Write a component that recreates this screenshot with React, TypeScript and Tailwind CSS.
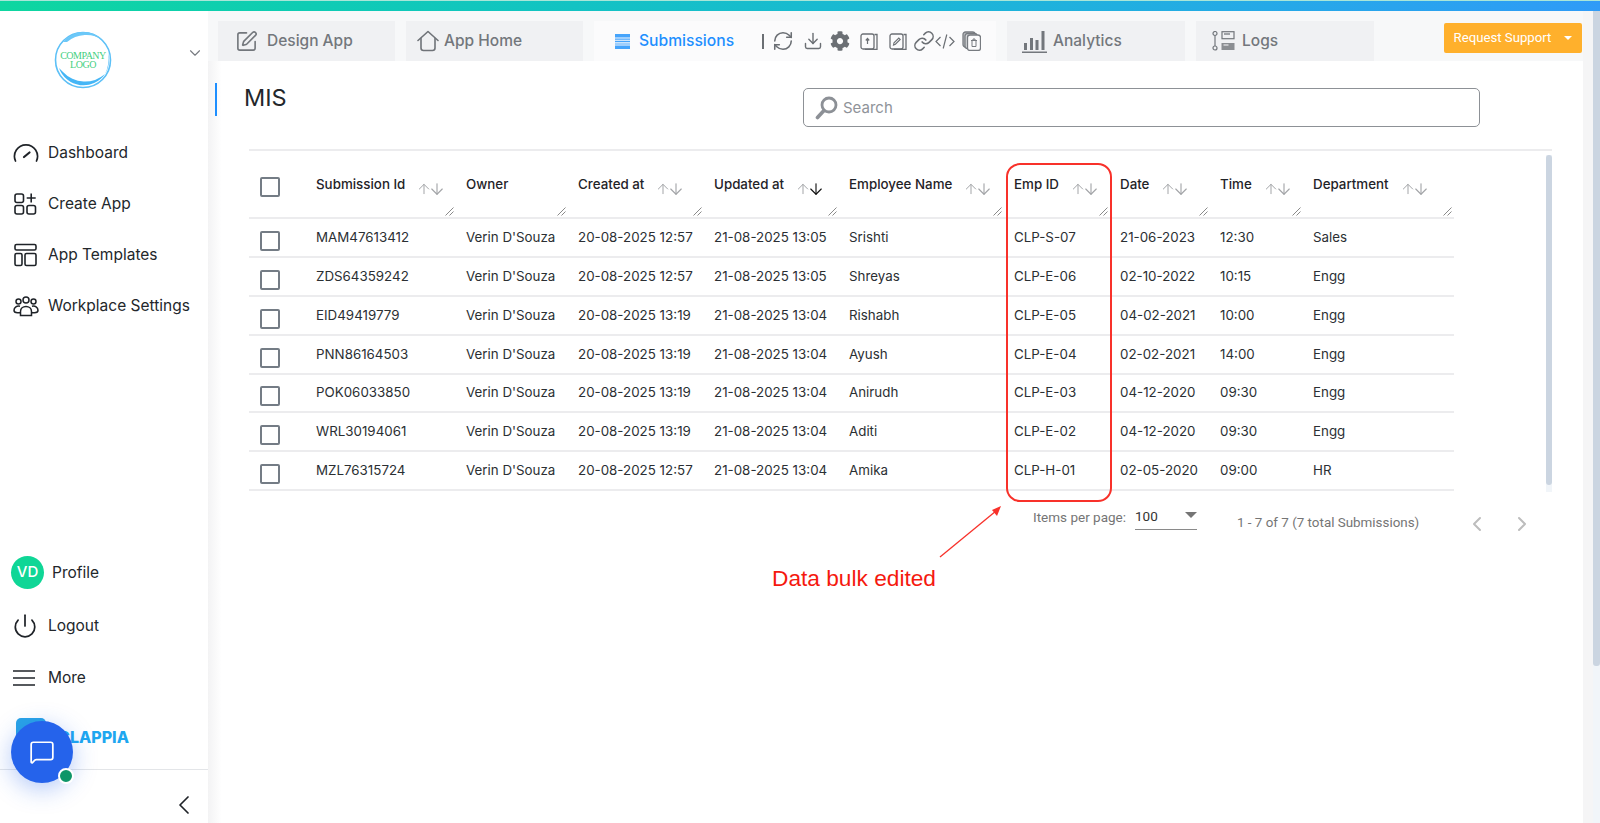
import { ArrowDown, ArrowUp, ChevronDown, ChevronLeft, ChevronRight, Download, Link, MessageSquare, Power, RefreshCw, SquarePen } from "lucide-react"
import { FaCog } from "react-icons/fa"

const gridCols = "grid grid-cols-[57px_150px_112px_136px_135px_165px_106px_100px_93px_151px]"

const columns = [
  { label: "Submission Id", sort: true },
  { label: "Owner", sort: false },
  { label: "Created at", sort: true },
  { label: "Updated at", sort: true, active: true },
  { label: "Employee Name", sort: true },
  { label: "Emp ID", sort: true },
  { label: "Date", sort: true },
  { label: "Time", sort: true },
  { label: "Department", sort: true },
]

const rows = [
  ["MAM47613412", "Verin D'Souza", "20-08-2025 12:57", "21-08-2025 13:05", "Srishti", "CLP-S-07", "21-06-2023", "12:30", "Sales"],
  ["ZDS64359242", "Verin D'Souza", "20-08-2025 12:57", "21-08-2025 13:05", "Shreyas", "CLP-E-06", "02-10-2022", "10:15", "Engg"],
  ["EID49419779", "Verin D'Souza", "20-08-2025 13:19", "21-08-2025 13:04", "Rishabh", "CLP-E-05", "04-02-2021", "10:00", "Engg"],
  ["PNN86164503", "Verin D'Souza", "20-08-2025 13:19", "21-08-2025 13:04", "Ayush", "CLP-E-04", "02-02-2021", "14:00", "Engg"],
  ["POK06033850", "Verin D'Souza", "20-08-2025 13:19", "21-08-2025 13:04", "Anirudh", "CLP-E-03", "04-12-2020", "09:30", "Engg"],
  ["WRL30194061", "Verin D'Souza", "20-08-2025 13:19", "21-08-2025 13:04", "Aditi", "CLP-E-02", "04-12-2020", "09:30", "Engg"],
  ["MZL76315724", "Verin D'Souza", "20-08-2025 12:57", "21-08-2025 13:04", "Amika", "CLP-H-01", "02-05-2020", "09:00", "HR"],
]

function CompanyLogo() {
  return (
    <svg width="60" height="60" viewBox="0 0 60 60">
      <circle cx="30" cy="30" r="27.5" fill="none" stroke="#5cc0f7" strokeWidth="1.6" />
      <path d="M6 38 A26 26 0 0 0 52 44 A30 30 0 0 1 10 42 Z" fill="#45b6f6" />
      <path d="M10 12 A27 27 0 0 1 50 10 A30 30 0 0 0 14 12 Z" fill="#6cc8f8" />
      <path d="M55 22 A27 27 0 0 1 52 44 A34 34 0 0 0 55 22 Z" fill="#45b6f6" />
      <text x="30" y="29" textAnchor="middle" fontSize="10" fill="#45cf80" fontFamily="'Liberation Serif', serif" letterSpacing="-0.5">COMPANY</text>
      <text x="30" y="38" textAnchor="middle" fontSize="10" fill="#45cf80" fontFamily="'Liberation Serif', serif" letterSpacing="-0.5">LOGO</text>
    </svg>
  )
}

function DashboardIcon() {
  return (
    <svg width="26" height="20" viewBox="0 0 26 20" fill="none" stroke="#1f2328" strokeWidth="1.7" strokeLinecap="round">
      <path d="M2.5 18 A11.5 11.5 0 1 1 23.5 18" />
      <path d="M11 14 L16.5 9.5" strokeWidth="2.2" />
    </svg>
  )
}

function CreateIcon() {
  return (
    <svg width="24" height="24" viewBox="0 0 24 24" fill="none" stroke="#1f2328" strokeWidth="1.6">
      <rect x="2" y="2" width="8.5" height="8.5" rx="2" />
      <rect x="2" y="13.5" width="8.5" height="8.5" rx="2" />
      <rect x="14" y="13.5" width="8.5" height="8.5" rx="2" />
      <path d="M18.2 1.5v9M13.7 6h9" />
    </svg>
  )
}

function TemplatesIcon() {
  return (
    <svg width="24" height="24" viewBox="0 0 24 24" fill="none" stroke="#1f2328" strokeWidth="1.6">
      <rect x="2" y="1.5" width="21" height="5.5" rx="1.5" />
      <rect x="2" y="10.5" width="7" height="12" rx="1.5" />
      <rect x="12" y="10.5" width="11" height="12" rx="1.5" />
    </svg>
  )
}

function PeopleIcon() {
  return (
    <svg width="26" height="22" viewBox="0 0 26 22" fill="none" stroke="#1f2328" strokeWidth="1.5">
      <circle cx="13" cy="5" r="3" />
      <circle cx="5.5" cy="6.5" r="2.5" />
      <circle cx="20.5" cy="6.5" r="2.5" />
      <path d="M7.5 20.5v-4c0-3 2.5-5 5.5-5s5.500 2 5.500 5v4z" />
      <path d="M7 11.200c-3-.8-6 1-6 4 0 1.500 1.500 2.500 3.500 2.500H7.500M19 11.200c3-.8 6 1 6 4 0 1.500-1.500 2.500-3.500 2.500H18.500" />
    </svg>
  )
}

function HomeIcon() {
  return (
    <svg width="22" height="22" viewBox="0 0 22 22" fill="none" stroke="#6f7378" strokeWidth="1.6" strokeLinejoin="round" strokeLinecap="round">
      <path d="M1 10.500 L11 1.500 L21 10.500" />
      <path d="M4 8.500v9.500a2.500 2.500 0 0 0 2.500 2.500h9a2.500 2.500 0 0 0 2.500-2.500V8.500" />
    </svg>
  )
}

function SubmissionsIcon() {
  return (
    <svg width="15" height="15" viewBox="0 0 15 15" fill="#46a4fb">
      <path d="M0 0h15v3.500H0zM0 4.500h15v1.200H0zM0 6.800h15v1.400H0zM0 9.400h15v1.200H0zM0 11.500h15V15H0z" />
    </svg>
  )
}

function DocIcon({ kind }: { kind: "upload" | "edit" }) {
  return (
    <svg width="18" height="17" viewBox="0 0 18 17" fill="none" stroke="#6b6f74" strokeWidth="1.300">
      <rect x="1" y="1" width="13" height="15" rx="2" />
      <path d="M14.500 1.500H17V16.300H5" />
      {kind === "upload" ? (
        <path d="M7.500 11V6M5.800 7.500 7.500 5.500 9.200 7.500" strokeWidth="1.200" />
      ) : (
        <path d="M4.500 12 5 9.800 9.800 5 11.200 6.400 6.400 11.200Z" strokeWidth="1.100" />
      )}
    </svg>
  )
}

function CodeIcon() {
  return (
    <svg width="20" height="17" viewBox="0 0 20 17" fill="none" stroke="#6b6f74" strokeWidth="1.200">
      <path d="M5.500 4 1 8.500 5.500 13M14.500 4 19 8.500 14.500 13M11.800 1.500 8.200 15.500" />
    </svg>
  )
}

function TrashCopiesIcon() {
  return (
    <svg width="19" height="20" viewBox="0 0 19 20" fill="none" stroke="#777b80" strokeWidth="1.300">
      <rect x="1" y="1" width="12" height="15" rx="2.500" fill="#bcbec1" />
      <rect x="3" y="2.500" width="12" height="15" rx="2.500" fill="#d5d6d8" />
      <rect x="5.500" y="4" width="13" height="15.500" rx="2.500" fill="#fbfbfc" />
      <path d="M9 9.500h6M10 9.500v6h4v-6M11 9V8h2v1" strokeWidth="1" />
    </svg>
  )
}

function BarsIcon() {
  return (
    <svg width="25" height="24" viewBox="0 0 25 24" fill="#73777c">
      <path d="M2 14h3v7H2zM8 9h3v12H8zM13.500 11h3v10h-3zM19.500 2h3v19h-3zM0 22.500h25V24H0z" />
    </svg>
  )
}

function LogsIcon() {
  return (
    <svg width="24" height="20" viewBox="0 0 24 20" fill="none" stroke="#73777c" strokeWidth="1.200">
      <circle cx="3" cy="2.500" r="2" />
      <circle cx="3" cy="17" r="2" />
      <path d="M3 4.500v10.500" />
      <rect x="10" y=".7" width="12" height="7" fill="none" />
      <path d="M12 3h6" strokeWidth="1.300" />
      <rect x="9.500" y="12" width="13" height="7" fill="#8b8e92" stroke="none" />
      <path d="M11.500 14h5" stroke="#e9eaeb" strokeWidth="1.200" />
    </svg>
  )
}

function SearchIcon() {
  return (
    <svg width="23" height="24" viewBox="0 0 23 24" fill="none" stroke="#8c9096">
      <circle cx="14" cy="9" r="7" strokeWidth="2.800" />
      <path d="M8.500 15 2.500 21.500" strokeWidth="3.600" strokeLinecap="round" />
    </svg>
  )
}

function ResizeHandle() {
  return (
    <svg className="absolute bottom-[1px] right-[2px]" width="9" height="9" viewBox="0 0 9 9" fill="none" stroke="#8a8a8a" strokeWidth="1">
      <path d="M.5 8.500 8.500 .5M4.500 8.500 8.500 4.500" />
    </svg>
  )
}

function Checkbox() {
  return <div className="h-[20px] w-[20px] rounded-[2px] border-2 border-[#747c85] bg-white" />
}

function NavItem({ icon, label, height = "h-[51px]" }: { icon: React.ReactNode; label: string; height?: string }) {
  return (
    <div className={`flex ${height} items-center pl-[13px]`}>
      <div className="flex w-[35px] shrink-0 items-center">{icon}</div>
      <span className="text-[15.5px] text-[#23272b]">{label}</span>
    </div>
  )
}

function Tab({ icon, label, width }: { icon: React.ReactNode; label: string; width: string }) {
  return (
    <div className={`flex h-[40px] ${width} items-center bg-[#f0f1f3]`}>
      {icon}
      <span className="text-[15.5px] font-medium text-[#73777c]">{label}</span>
    </div>
  )
}

export default function App() {
  return (
    <div className="relative flex h-[823px] w-[1600px] flex-col overflow-hidden bg-white font-['Inter',sans-serif]">
      <div className="h-[11px] shrink-0 border-t border-t-[#a9e6d8] bg-gradient-to-r from-[#0fd6a0] to-[#2f9bf7]" />
      <div className="flex min-h-0 flex-1">
        <aside className="flex w-[208px] shrink-0 flex-col bg-white">
          <div className="flex h-[116px] items-start pl-[53px] pt-[19px]">
            <CompanyLogo />
            <ChevronDown className="ml-[73px] mt-[14px] text-[#777b80]" size={18} strokeWidth={1.5} />
          </div>
          <NavItem icon={<DashboardIcon />} label="Dashboard" />
          <NavItem icon={<CreateIcon />} label="Create App" />
          <NavItem icon={<TemplatesIcon />} label="App Templates" />
          <NavItem icon={<PeopleIcon />} label="Workplace Settings" />
          <div className="mt-auto">
            <div className="flex h-[54px] items-center pl-[11px]">
              <div className="flex h-[33px] w-[33px] items-center justify-center rounded-full bg-[#0fd696] text-[15px] font-medium text-white">VD</div>
              <span className="ml-[8px] pt-[2px] text-[15.5px] text-[#23272b]">Profile</span>
            </div>
            <NavItem icon={<Power className="ml-[-1px] text-[#1f2328]" size={26} strokeWidth={1.6} />} label="Logout" height="h-[53px]" />
            <NavItem
              icon={
                <svg width="22" height="16" viewBox="0 0 22 16" stroke="#1f2328" strokeWidth="1.500">
                  <path d="M0 1h22M0 8h22M0 15h22" />
                </svg>
              }
              label="More"
            />
            <div className="flex h-[66px] items-start pl-[16px] pt-[15px]">
              <div className="h-[32px] w-[30px] rounded-[5px] bg-[#29a3e6]" />
              <span className="ml-[12px] mt-[7px] text-[16px] font-extrabold text-[#1ea7f0]">CLAPPIA</span>
            </div>
            <div className="flex h-[54px] items-start justify-end border-t border-[#e3e5e8] pr-[8px] pt-[19px]">
              <ChevronLeft className="text-[#1f2328]" size={32} strokeWidth={1.3} />
            </div>
          </div>
        </aside>

        <main className="flex min-w-0 flex-1 flex-col bg-gradient-to-r from-[#f3f3f4] via-white via-[1%] to-white">
          <div className="flex h-[50px] shrink-0 gap-[11px] bg-[#f7f8f9] pl-[10px] pt-[10px]">
            <Tab width="w-[177px]" label="Design App" icon={<SquarePen className="ml-[17px] mr-[9px] text-[#73777c]" size={23} strokeWidth={1.7} />} />
            <Tab width="w-[177px]" label="App Home" icon={<span className="ml-[11px] mr-[5px]"><HomeIcon /></span>} />
            <div className="flex h-[40px] w-[402px] items-center bg-[#fbfbfc] pl-[21px]">
              <SubmissionsIcon />
              <span className="ml-[9px] text-[15.650px] font-medium text-[#1e8fff]">Submissions</span>
              <div className="ml-[28px] h-[15px] w-[2px] bg-[#6b6f74]" />
              <RefreshCw className="ml-[8px] text-[#6b6f74]" size={22} strokeWidth={1.7} />
              <Download className="ml-[9px] text-[#6b6f74]" size={20} strokeWidth={1.7} />
              <FaCog className="ml-[7px] text-[#6b6f74]" size={20} />
              <span className="ml-[10px]"><DocIcon kind="upload" /></span>
              <span className="ml-[11px]"><DocIcon kind="edit" /></span>
              <Link className="ml-[6px] text-[#6b6f74]" size={22} strokeWidth={1.7} />
              <span><CodeIcon /></span>
              <span className="ml-[7px]"><TrashCopiesIcon /></span>
            </div>
            <Tab width="w-[178px]" label="Analytics" icon={<span className="ml-[15px] mr-[6px]"><BarsIcon /></span>} />
            <Tab width="w-[178px]" label="Logs" icon={<span className="ml-[16px] mr-[6px]"><LogsIcon /></span>} />
            <button className="ml-auto mr-[1px] mt-[2px] flex h-[30px] w-[138px] items-center justify-center gap-[13px] rounded-[2px] bg-[#ffb02c] pb-[1px] font-['Roboto',sans-serif] text-[13.200px] text-white">
              Request Support
              <span className="h-0 w-0 border-x-[4px] border-t-[4px] border-x-transparent border-t-white" />
            </button>
          </div>

          <div className="flex min-h-0 flex-1 flex-col pl-[7px]">
            <div className="flex h-[88px] shrink-0 items-start pt-[22px]">
              <div className="h-[33px] w-[2px] bg-[#1e8fff]" />
              <h1 className="ml-[27px] w-[559px] text-[23.500px] leading-[30px] text-[#23272b]">MIS</h1>
              <div className="mt-[5px] flex h-[39px] w-[677px] items-center rounded-[5px] border border-[#8d9196] pl-[11px]">
                <SearchIcon />
                <span className="ml-[5px] pt-[2px] text-[15px] text-[#8f9399]">Search</span>
              </div>
            </div>

            <div className="ml-[34px] w-[1303px] border-t-2 border-[#ececee]">
              <div className="flex">
                <div className="w-[1205px] shrink-0">
                  <div className={`${gridCols} h-[68.4px] border-b-2 border-[#ececee]`}>
                    <div className="pl-[11px] pt-[26px]">
                      <Checkbox />
                    </div>
                    {columns.map((col) => (
                      <div key={col.label} className="relative flex items-start pl-[10px] pt-[24px]">
                        <span className="text-[13.350px] font-medium leading-[18px] text-[#1f2328]">{col.label}</span>
                        {col.sort && (
                          <span className="ml-[11px] mt-[5px] flex items-center">
                            <ArrowUp className="text-[#a3a5a8]" size={16} strokeWidth={1.5} />
                            <ArrowDown className={col.active ? "ml-[-4px] text-[#111111]" : "ml-[-4px] text-[#a3a5a8]"} size={18} strokeWidth={1.5} />
                          </span>
                        )}
                        <ResizeHandle />
                      </div>
                    ))}
                  </div>
                  {rows.map((row) => (
                    <div key={row[0]} className={`${gridCols} h-[38.8px] items-center border-b-2 border-[#ececee]`}>
                      <div className="mt-[7px] pl-[11px]">
                        <Checkbox />
                      </div>
                      {row.map((cell, i) => (
                        <div key={i} className="pb-[1px] pl-[10px] text-[13.350px] text-[#2b2f33]">
                          {cell}
                        </div>
                      ))}
                    </div>
                  ))}
                </div>
                <div className="ml-auto mt-[4px] h-[337px] w-[6px] bg-[#f1f5f9]">
                  <div className="h-[330px] rounded-[3px] bg-[#cbd5e1]" />
                </div>
              </div>

              <div className="flex w-[1290px] items-start">
                <span className="ml-[784px] mt-[15px] font-['Roboto',sans-serif] text-[13.500px] text-[#757575]">Items per page:</span>
                <div className="ml-[9px] mt-[14px] flex h-[24px] w-[62px] items-start border-b border-[#8a8a8a] font-['Roboto',sans-serif] text-[13.500px] text-[#333333]">
                  100
                  <span className="ml-auto mt-[6px] h-0 w-0 border-x-[6px] border-t-[6px] border-x-transparent border-t-[#757575]" />
                </div>
                <span className="ml-[40px] mt-[21px] font-['Roboto',sans-serif] text-[13.400px] text-[#757575]">1 - 7 of 7 (7 total Submissions)</span>
                <ChevronLeft className="ml-[46px] mt-[20px] text-[#bdbdbd]" size={24} strokeWidth={2} />
                <ChevronRight className="ml-[21px] mt-[20px] text-[#bdbdbd]" size={24} strokeWidth={2} />
              </div>
            </div>
          </div>
        </main>

        <div className="flex w-[17px] shrink-0 bg-[#f5f5f6]">
          <div className="ml-[10px] w-[7px] bg-[#f1f5f9]">
            <div className="h-[655px] rounded-b-[3px] bg-[#cbd5e1]" />
          </div>
        </div>
      </div>

      {/* annotation drawn over the table */}
      <div className="absolute left-[1006px] top-[163px] h-[339px] w-[106px] rounded-[14px] border-2 border-[#f8312a]" />
      <svg className="absolute left-[930px] top-[500px]" width="80" height="65" viewBox="0 0 80 65" fill="none">
        <path d="M10 57 L66 11" stroke="#f8312a" strokeWidth="1.300" />
        <path d="M71 6 L62 10 L67 16 Z" fill="#f8312a" />
      </svg>
      <span className="absolute left-[772px] top-[565px] font-['Liberation_Sans',sans-serif] text-[22.700px] leading-[26px] text-[#f5190f]">Data bulk edited</span>

      {/* chat launcher */}
      <div className="absolute left-[11px] top-[721px] flex h-[62px] w-[62px] items-center justify-center rounded-full bg-[#2563eb] shadow-[0_6px_24px_rgba(37,99,235,0.35)]">
        <MessageSquare className="text-white" size={26} strokeWidth={1.6} />
        <div className="absolute left-[47px] top-[47px] h-[16px] w-[16px] rounded-full border-2 border-white bg-[#0e9668]" />
      </div>
    </div>
  )
}
